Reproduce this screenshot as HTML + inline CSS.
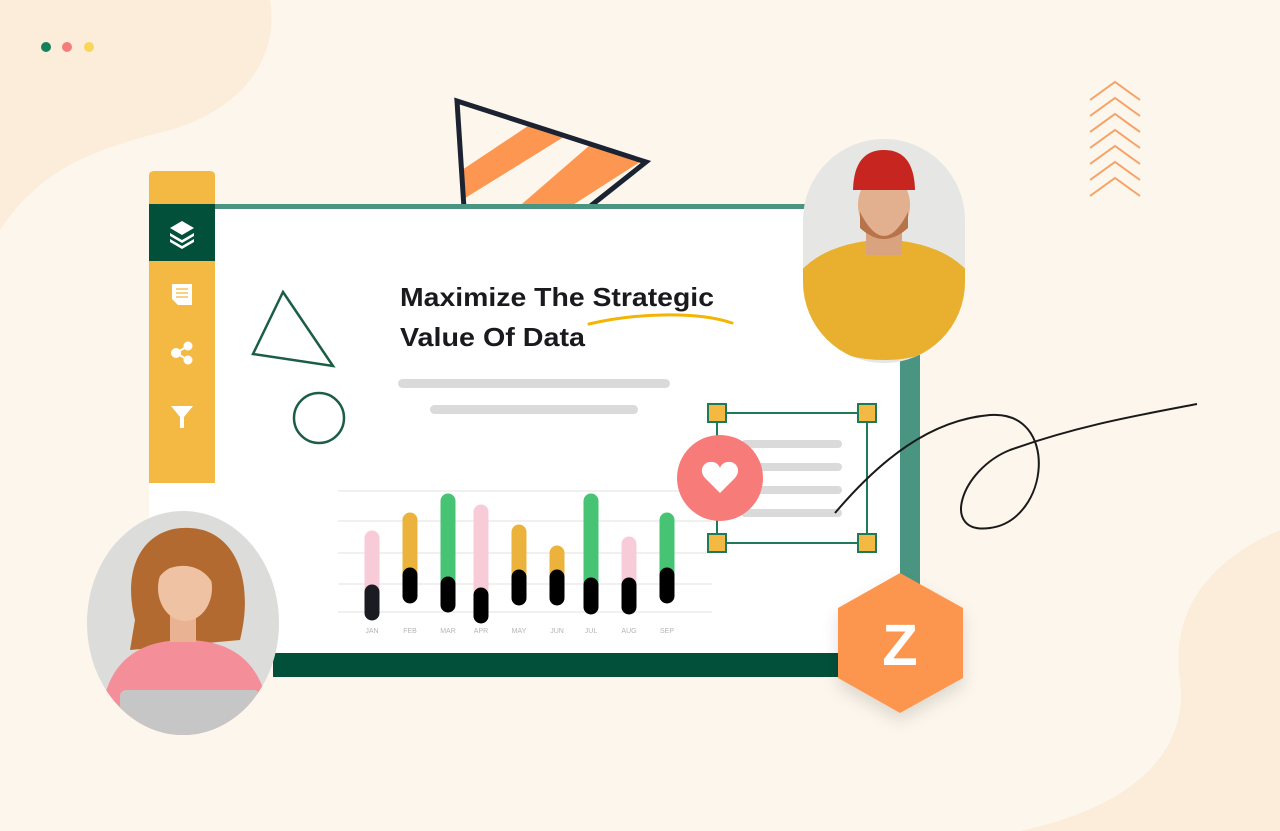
<!DOCTYPE html>
<html><head><meta charset="utf-8"><style>
html,body{margin:0;padding:0;width:1280px;height:831px;overflow:hidden;background:#fcf6ec}
svg{display:block}
text{font-family:"Liberation Sans",sans-serif}
</style></head><body>
<svg width="1280" height="831" viewBox="0 0 1280 831" xmlns="http://www.w3.org/2000/svg">
<defs>
<clipPath id="man"><path d="M803 220 A81 81 0 0 1 965 220 L965 282 A81 81 0 0 1 803 282 Z"/></clipPath>
<clipPath id="woman"><ellipse cx="183" cy="623" rx="96" ry="112"/></clipPath>
<clipPath id="tri"><path d="M457 101 L646 162 L588 208 L464 208 Z"/></clipPath>
<filter id="sh" x="-30%" y="-30%" width="160%" height="160%"><feDropShadow dx="0" dy="8" stdDeviation="8" flood-color="#000" flood-opacity="0.12"/></filter>
</defs>
<rect width="1280" height="831" fill="#fcf6ec"/>
<path d="M0 0 L270 0 C280 60 240 110 170 130 C90 150 40 170 0 230 Z" fill="#fcedda"/>
<path d="M1280 530 C1210 560 1170 610 1180 680 C1190 760 1120 810 1020 831 L1280 831 Z" fill="#fcedda"/>
<circle cx="46" cy="47" r="5" fill="#15805a"/>
<circle cx="67" cy="47" r="5" fill="#f47c7c"/>
<circle cx="89" cy="47" r="5" fill="#f9d55a"/>
<g fill="none" stroke="#f6a266" stroke-width="2">
<path d="M1090 100 L1115 82 L1140 100"/><path d="M1090 116 L1115 98 L1140 116"/><path d="M1090 132 L1115 114 L1140 132"/><path d="M1090 148 L1115 130 L1140 148"/><path d="M1090 164 L1115 146 L1140 164"/><path d="M1090 180 L1115 162 L1140 180"/><path d="M1090 196 L1115 178 L1140 196"/>
</g>
<g clip-path="url(#tri)">
<path d="M462 170 L540 118 L575 130 L462 200 Z" fill="#fc9650"/>
<path d="M515 210 L590 145 L640 162 L565 210 Z" fill="#fc9650"/>
</g>
<path d="M464 208 L457 101 L646 162 L588 208" fill="none" stroke="#1b2232" stroke-width="5"/>
<!-- card -->
<rect x="149" y="206" width="752" height="448" fill="#ffffff"/>
<rect x="215" y="204" width="590" height="5" fill="#4a9582"/>
<rect x="900" y="355" width="20" height="322" fill="#4a9582"/>
<rect x="273" y="653" width="567" height="24" fill="#02503a"/>
<path d="M149 176 Q149 171 154 171 L210 171 Q215 171 215 176 L215 483 L149 483 Z" fill="#f4b942"/>
<rect x="149" y="204" width="66" height="57" fill="#02503a"/>
<g fill="#fff">
<path d="M182 221 L194 228 L182 235 L170 228 Z"/>
<path d="M170 233 L182 240 L194 233 L194 236 L182 243 L170 236 Z"/>
<path d="M170 239 L182 246 L194 239 L194 242 L182 249 L170 242 Z"/>
<path d="M172 284 L192 284 L192 305 L178 305 L172 299 Z"/>
<circle cx="188" cy="346" r="4.5"/><circle cx="176" cy="353" r="5"/><circle cx="188" cy="360" r="4.5"/>
<path d="M171 406 L193 406 L184 417 L184 428 L180 428 L180 417 Z"/>
</g>
<g stroke="#f4b942" stroke-width="1.3"><line x1="176" y1="289" x2="188" y2="289"/><line x1="176" y1="293" x2="188" y2="293"/><line x1="176" y1="297" x2="188" y2="297"/></g>
<g stroke="#fff" stroke-width="2"><line x1="176" y1="353" x2="188" y2="346"/><line x1="176" y1="353" x2="188" y2="360"/></g>
<text x="400" y="306" font-size="26" font-weight="bold" fill="#1a1a1e" textLength="314" lengthAdjust="spacingAndGlyphs">Maximize The Strategic</text>
<text x="400" y="346" font-size="26" font-weight="bold" fill="#1a1a1e" textLength="185" lengthAdjust="spacingAndGlyphs">Value Of Data</text>
<path d="M589 324 C640 312 700 312 732 323" fill="none" stroke="#f4b400" stroke-width="3" stroke-linecap="round"/>
<rect x="398" y="379" width="272" height="9" rx="4.5" fill="#dadada"/>
<rect x="430" y="405" width="208" height="9" rx="4.5" fill="#dadada"/>
<path d="M283 292 L333 366 L253 354 Z" fill="none" stroke="#1b5e45" stroke-width="2.5"/>
<circle cx="319" cy="418" r="25" fill="none" stroke="#1b5e45" stroke-width="2.5"/>
<g stroke="#f0f0f0" stroke-width="2"><line x1="338" y1="491" x2="712" y2="491"/><line x1="338" y1="521" x2="712" y2="521"/><line x1="338" y1="553" x2="712" y2="553"/><line x1="338" y1="584" x2="712" y2="584"/><line x1="338" y1="612" x2="712" y2="612"/></g>
<g stroke-linecap="round" stroke-width="15">
<line x1="372" y1="538" x2="372" y2="600" stroke="#f8cbd8"/><line x1="372" y1="592" x2="372" y2="613" stroke="#1b1c21"/>
<line x1="410" y1="520" x2="410" y2="580" stroke="#ecb33c"/><line x1="410" y1="575" x2="410" y2="596" stroke="#000"/>
<line x1="448" y1="501" x2="448" y2="590" stroke="#46c474"/><line x1="448" y1="584" x2="448" y2="605" stroke="#000"/>
<line x1="481" y1="512" x2="481" y2="600" stroke="#f8cbd8"/><line x1="481" y1="595" x2="481" y2="616" stroke="#000"/>
<line x1="519" y1="532" x2="519" y2="580" stroke="#ecb33c"/><line x1="519" y1="577" x2="519" y2="598" stroke="#000"/>
<line x1="557" y1="553" x2="557" y2="580" stroke="#ecb33c"/><line x1="557" y1="577" x2="557" y2="598" stroke="#000"/>
<line x1="591" y1="501" x2="591" y2="590" stroke="#46c474"/><line x1="591" y1="585" x2="591" y2="607" stroke="#000"/>
<line x1="629" y1="544" x2="629" y2="590" stroke="#f8cbd8"/><line x1="629" y1="585" x2="629" y2="607" stroke="#000"/>
<line x1="667" y1="520" x2="667" y2="580" stroke="#46c474"/><line x1="667" y1="575" x2="667" y2="596" stroke="#000"/>
</g>
<g font-size="7" fill="#b5b5b5" text-anchor="middle">
<text x="372" y="633">JAN</text><text x="410" y="633">FEB</text><text x="448" y="633">MAR</text><text x="481" y="633">APR</text><text x="519" y="633">MAY</text><text x="557" y="633">JUN</text><text x="591" y="633">JUL</text><text x="629" y="633">AUG</text><text x="667" y="633">SEP</text>
</g>
<g stroke="#dadada" stroke-width="8" stroke-linecap="round"><line x1="745" y1="444" x2="838" y2="444"/><line x1="745" y1="467" x2="838" y2="467"/><line x1="745" y1="490" x2="838" y2="490"/><line x1="745" y1="513" x2="838" y2="513"/></g>
<rect x="717" y="413" width="150" height="130" fill="none" stroke="#1e7a57" stroke-width="2"/>
<g fill="#f4b942" stroke="#1e7a57" stroke-width="2">
<rect x="708" y="404" width="18" height="18"/><rect x="858" y="404" width="18" height="18"/><rect x="708" y="534" width="18" height="18"/><rect x="858" y="534" width="18" height="18"/>
</g>
<circle cx="720" cy="478" r="43" fill="#f77b78"/>
<path d="M720 493 L705 478 C698 470 704 461 712 462 C716 462 719 465 720 468 C721 465 724 462 728 462 C736 461 742 470 735 478 Z" fill="#fff"/>
<path d="M835 513 C880 460 930 420 990 415 C1060 410 1050 520 990 528 C940 535 960 470 1010 450 C1080 425 1140 415 1197 404" fill="none" stroke="#1a1a1a" stroke-width="2"/>
<g clip-path="url(#man)">
<rect x="803" y="139" width="162" height="224" fill="#e6e6e4"/>
<ellipse cx="884" cy="300" rx="95" ry="60" fill="#e9b030"/>
<rect x="866" y="215" width="36" height="40" fill="#d9a37f"/>
<ellipse cx="884" cy="205" rx="26" ry="32" fill="#e2b08f"/>
<path d="M860 212 Q884 260 908 212 L908 228 Q884 250 860 228 Z" fill="#b7734a"/>
<path d="M853 190 Q854 150 884 150 Q914 150 915 190 Z" fill="#c6261f"/>
</g>
<g clip-path="url(#woman)">
<rect x="87" y="511" width="192" height="224" fill="#dcdcda"/>
<path d="M135 620 C120 560 150 525 190 528 C235 530 255 580 240 640 L130 650 Z" fill="#b36a30"/>
<path d="M100 735 C100 660 140 640 185 640 C230 640 270 660 270 735 Z" fill="#f48e98"/>
<rect x="170" y="610" width="26" height="32" fill="#e9b393"/>
<ellipse cx="185" cy="588" rx="27" ry="33" fill="#efc2a3"/>
<path d="M150 595 C140 550 175 540 200 548 C220 555 225 575 218 600 C215 575 195 560 170 568 C158 574 155 585 150 595 Z" fill="#b36a30"/>
<rect x="120" y="690" width="140" height="50" rx="6" fill="#c6c6c6"/>
</g>
<path d="M900 573 L963 608 L963 678 L900 713 L838 678 L838 608 Z" fill="#fc9650" filter="url(#sh)"/>
<text x="900" y="665" font-size="58" font-weight="bold" fill="#fff" text-anchor="middle">Z</text>
</svg>
</body></html>
